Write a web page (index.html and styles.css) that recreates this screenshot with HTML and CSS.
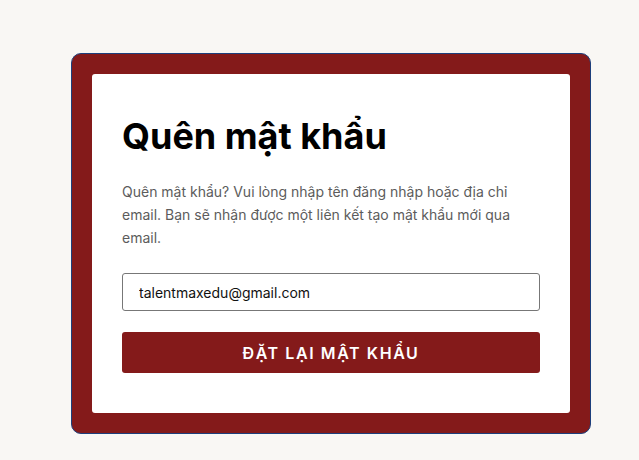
FILE: index.html
```html
<!DOCTYPE html>
<html lang="vi">
<head>
    <meta charset="UTF-8">
    <meta name="viewport" content="width=device-width, initial-scale=1.0">
    <title>Quên mật khẩu</title>
    <link rel="stylesheet" href="styles.css">
</head>
<body>

    <div class="frame">
        <div class="card">
            <h1>Quên mật khẩu</h1>
            <p class="intro">Quên mật khẩu? Vui lòng nhập tên đăng nhập hoặc địa chỉ email. Bạn sẽ nhận được một liên kết tạo mật khẩu mới qua email.</p>
            <form class="reset-form">
                <input type="text" class="field" value="talentmaxedu@gmail.com">
                <button type="button" class="submit">Đặt lại mật khẩu</button>
            </form>
        </div>
    </div>

</body>
</html>
```

FILE: styles.css
```css
html, body {
    margin: 0;
    height: 100%;
}

body {
    background: #f9f7f4;
    font-family: Inter, "Noto Sans", sans-serif;
    padding: 53px 0 0 71px;
    box-sizing: border-box;
}

/* red frame around the white card */
.frame {
    width: 520px;
    box-sizing: border-box;
    padding: 20px;
    background: #841a1a;
    border: 1px solid #1d3f7c;
    border-radius: 10px;
}

.card {
    background: #fff;
    border-radius: 3px;
    padding: 40px 30px 40px;
}

.card h1 {
    margin: 0;
    font-size: 36px;
    font-weight: 700;
    line-height: 44px;
    color: #000;
}

.intro {
    margin: 22px 0 24px;
    font-size: 14px;
    line-height: 23px;
    color: #5c5c5c;
}

.reset-form {
    display: flex;
    flex-direction: column;
    gap: 21px;
}

.field {
    height: 38px;
    box-sizing: border-box;
    padding: 0 16px;
    font-family: Inter, "Noto Sans", sans-serif;
    font-size: 14px;
    color: #111;
    border: 1px solid #777;
    border-radius: 3px;
    background: #fff;
}

.submit {
    height: 41px;
    border: none;
    border-radius: 3px;
    background: #841a1a;
    color: #fff;
    font-family: Inter, "Noto Sans", sans-serif;
    font-size: 16px;
    font-weight: 600;
    letter-spacing: 1.6px;
    text-transform: uppercase;
    cursor: pointer;
}
```
